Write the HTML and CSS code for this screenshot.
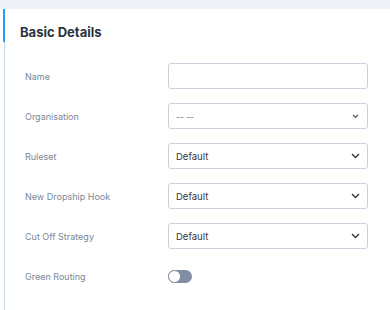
FILE: index.html
```html
<!DOCTYPE html>
<html lang="en">
<head>
    <meta charset="UTF-8">
    <meta name="viewport" content="width=device-width, initial-scale=1.0">
    <title>Basic Details</title>
    <link rel="stylesheet" href="styles.css">
</head>
<body>
    <div class="top-band"></div>
    <div class="card">
        <div class="card-header">
            <h2>Basic Details</h2>
        </div>
        <div class="form">
            <div class="form-row">
                <label>Name</label>
                <input type="text" class="field">
            </div>
            <div class="form-row">
                <label>Organisation</label>
                <div class="field select small-arrow">
                    <span class="placeholder">-- --</span>
                    <svg width="7" height="5" viewBox="0 0 7 5"><path d="M1 1l2.5 2.5L6 1" fill="none" stroke="#555" stroke-width="1.2"/></svg>
                </div>
            </div>
            <div class="form-row">
                <label>Ruleset</label>
                <div class="field select">
                    <span>Default</span>
                    <svg width="9" height="6" viewBox="0 0 9 6"><path d="M1 1l3.5 3.5L8 1" fill="none" stroke="#333" stroke-width="1.4"/></svg>
                </div>
            </div>
            <div class="form-row">
                <label>New Dropship Hook</label>
                <div class="field select">
                    <span>Default</span>
                    <svg width="9" height="6" viewBox="0 0 9 6"><path d="M1 1l3.5 3.5L8 1" fill="none" stroke="#333" stroke-width="1.4"/></svg>
                </div>
            </div>
            <div class="form-row">
                <label>Cut Off Strategy</label>
                <div class="field select">
                    <span>Default</span>
                    <svg width="9" height="6" viewBox="0 0 9 6"><path d="M1 1l3.5 3.5L8 1" fill="none" stroke="#333" stroke-width="1.4"/></svg>
                </div>
            </div>
            <div class="form-row">
                <label>Green Routing</label>
                <div class="toggle"><span class="knob"></span></div>
            </div>
        </div>
    </div>
</body>
</html>
```
FILE: styles.css
```css
body {
    margin: 0;
    font-family: 'Inter', 'Roboto', sans-serif;
    background: #fff;
}

.top-band {
    height: 9px;
    background: #eef1f5;
}

.card {
    margin-left: 4px;
    border-left: 1px solid #c6d4e4;
    min-height: 301px;
}

.card-header {
    position: relative;
    height: 33px;
    padding-left: 15px;
}

/* blue accent over the left edge of the header */
.card-header::before {
    content: "";
    position: absolute;
    left: -2px;
    top: 0;
    width: 2px;
    height: 33px;
    background: #2d9cf0;
}

.card-header h2 {
    margin: 0;
    padding-top: 15px;
    font-size: 13px;
    font-weight: 700;
    color: #2c3441;
    line-height: 16px;
}

.form {
    padding: 21px 0 0 20px;
    display: flex;
    flex-direction: column;
    gap: 14px;
}

.form-row {
    display: flex;
    align-items: center;
    height: 26px;
}

.form-row label {
    width: 143px;
    font-size: 9px;
    color: #7a8798;
    padding-top: 1px;
}

.field {
    box-sizing: border-box;
    width: 200px;
    height: 26px;
    border: 1px solid #c9d2dc;
    border-radius: 3px;
    background: #fff;
    margin: 0;
}

.select {
    display: flex;
    align-items: center;
    justify-content: space-between;
    padding: 0 7px;
    font-size: 9.5px;
    color: #3a3340;
}

.select .placeholder {
    color: #8a8f99;
    letter-spacing: -0.5px;
}

.small-arrow svg {
    margin-right: 1px;
}

.toggle {
    position: relative;
    width: 24px;
    height: 13px;
    border-radius: 7px;
    background: #7f8ea3;
}

.knob {
    position: absolute;
    left: 0;
    top: 0;
    width: 11px;
    height: 11px;
    border-radius: 50%;
    background: #fff;
    border: 1px solid #7f8ea3;
}
```
